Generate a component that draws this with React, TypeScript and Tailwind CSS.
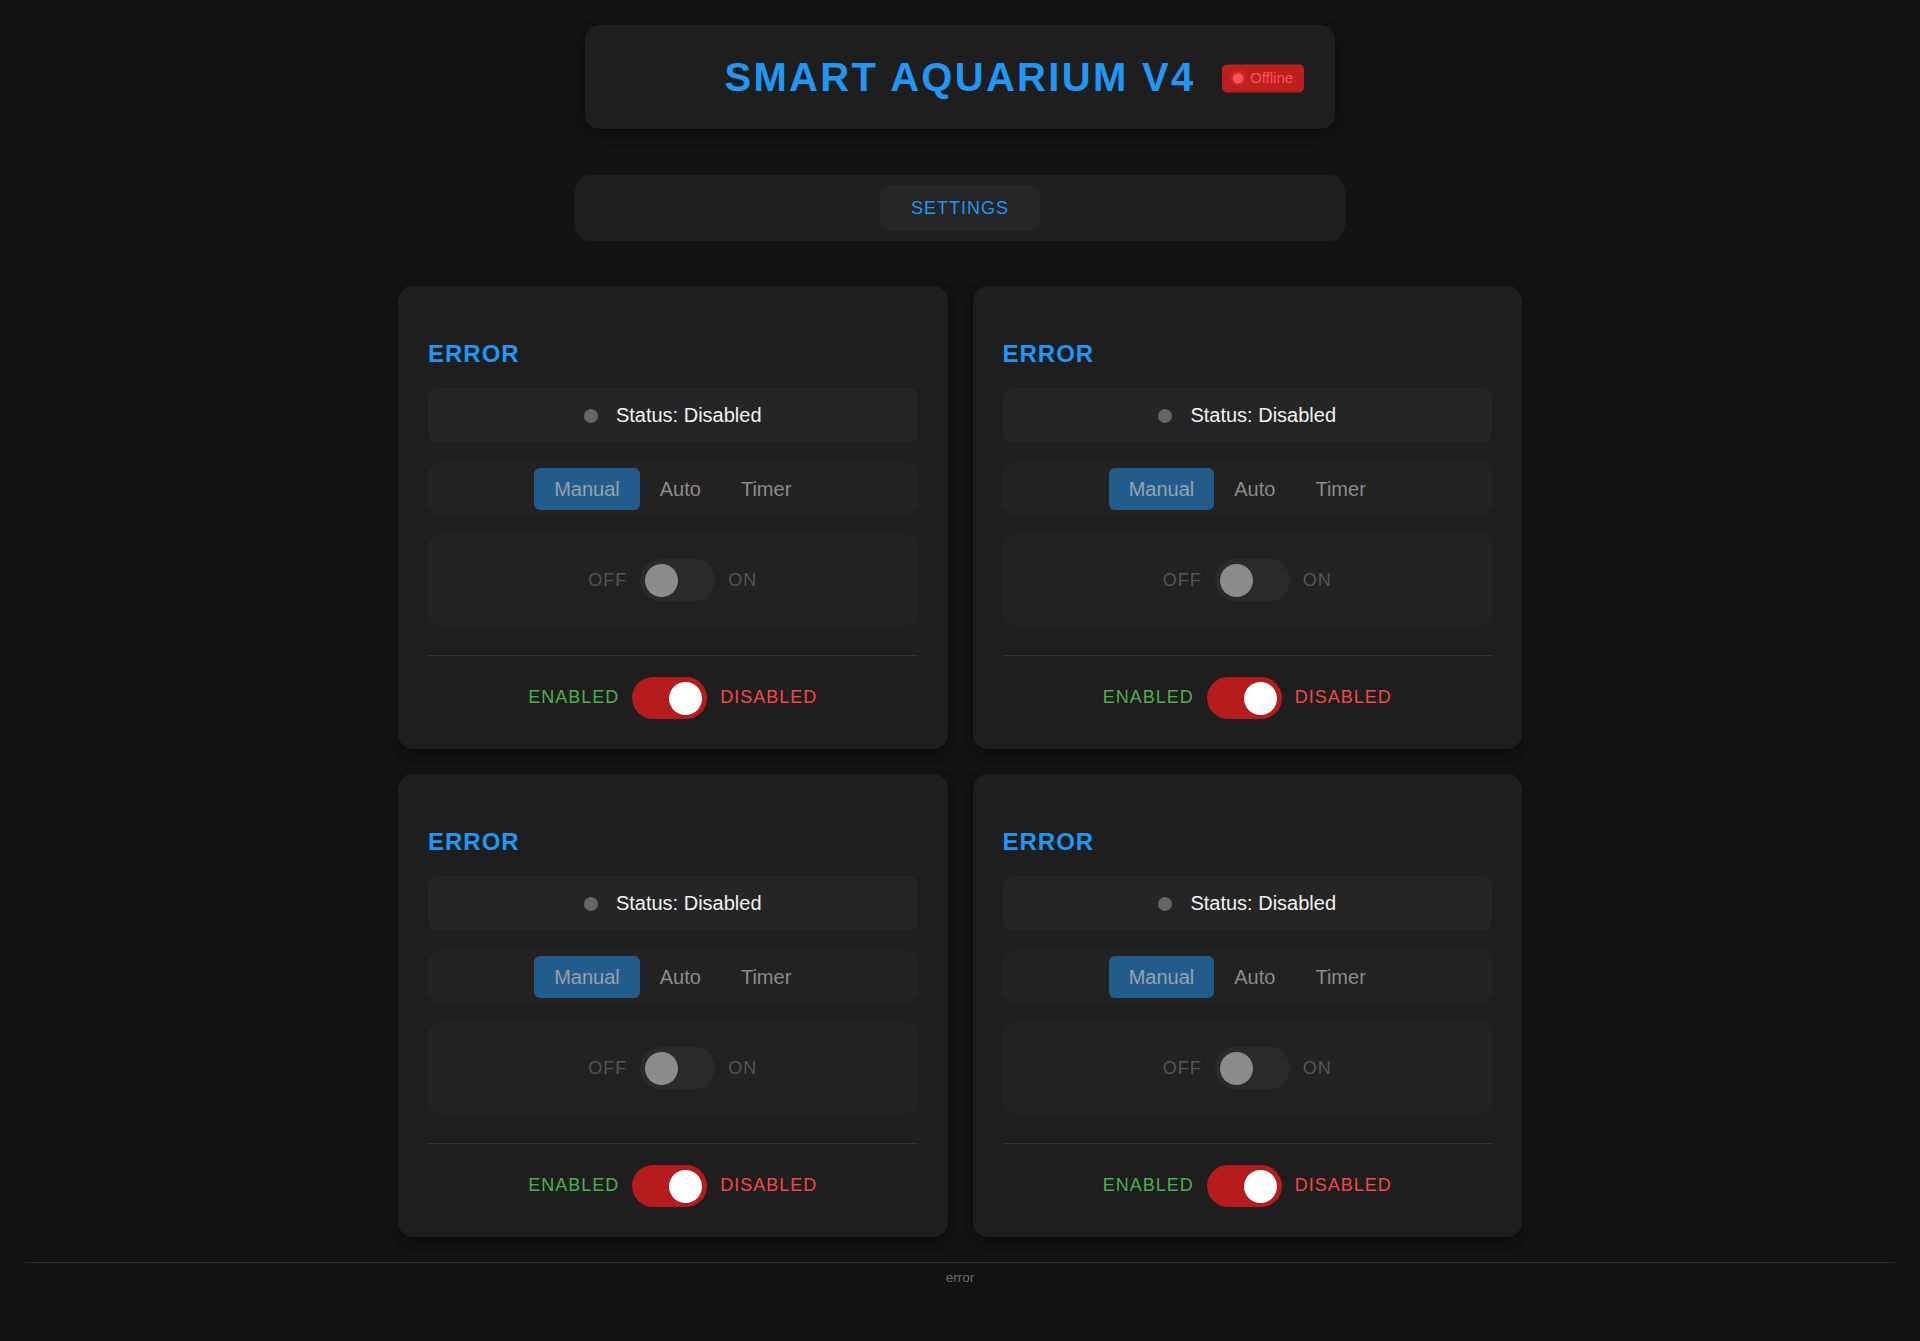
const font = { fontFamily: '"Liberation Sans", Arial, sans-serif' };

function Switch({ on, track, knob }: { on: boolean; track: string; knob: string }) {
  return (
    <div className={`relative w-[75px] h-[42px] rounded-full ${track}`}>
      <span
        className={`absolute top-[4.5px] w-[33px] h-[33px] rounded-full ${knob} ${on ? "right-[5px]" : "left-[5px]"}`}
      />
    </div>
  );
}

function DeviceCard() {
  return (
    <div className="bg-[#1e1e1e] rounded-[15px] pt-[54px] px-[30px] pb-[30px] shadow-[0_4px_10px_rgba(0,0,0,0.35)]">
      <h2 className="text-[24px] leading-[28px] font-bold tracking-[1px] text-[#2196f3] mb-5">ERROR</h2>

      <div className="h-[55px] bg-[#252525] rounded-[10px] flex items-center justify-center">
        <span className="w-[14px] h-[14px] rounded-full bg-[#666] mr-[18px]" />
        <span className="text-[20px] text-[#f2f2f2] -translate-y-px">Status: Disabled</span>
      </div>

      <div className="mt-5 h-[52px] bg-[#222222] rounded-[10px] flex items-center justify-center">
        <button className="h-[42px] px-5 rounded-[6px] bg-[#225c8b] text-[20px] text-[#97a2ac]">Manual</button>
        <button className="h-[42px] px-5 text-[20px] text-[#8c8c8c]">Auto</button>
        <button className="h-[42px] px-5 text-[20px] text-[#8c8c8c]">Timer</button>
      </div>

      <div className="mt-5 h-[90px] bg-[#222222] rounded-[10px] flex items-center justify-center gap-[13px]">
        <span className="text-[18px] tracking-[1px] text-[#555]">OFF</span>
        <Switch on={false} track="bg-[#2a2a2a]" knob="bg-[#8c8c8c]" />
        <span className="text-[18px] tracking-[1px] text-[#555]">ON</span>
      </div>

      <div className="mt-[30px] border-t border-[#333] pt-[21px] flex items-center justify-center gap-[13px]">
        <span className="text-[18px] tracking-[1px] text-[#4caf50] -translate-y-px">ENABLED</span>
        <Switch on={true} track="bg-[#b71c1c]" knob="bg-white" />
        <span className="text-[18px] tracking-[1px] text-[#f44848] -translate-y-px">DISABLED</span>
      </div>
    </div>
  );
}

export default function App() {
  return (
    <div className="min-h-screen bg-[#121212] px-[25px] pt-[25px] pb-[40px]" style={font}>
      <header className="w-[750px] mx-auto h-[104px] bg-[#1e1e1e] rounded-[15px] flex items-center justify-center shadow-[0_4px_12px_rgba(0,0,0,0.35)]">
        <div className="relative">
          <h1 className="text-[40px] font-bold tracking-[2.3px] text-[#2196f3]">SMART AQUARIUM V4</h1>
          <span className="absolute left-full top-1/2 -translate-y-[45%] ml-[27px] h-[28px] px-[10.5px] rounded-[5px] bg-[#bd1f1f] flex items-center gap-[7px] whitespace-nowrap">
            <span className="w-[10px] h-[10px] rounded-full bg-[#ff5252] shadow-[0_0_4px_#ff5252]" />
            <span className="text-[15px] text-[#ff5252]">Offline</span>
          </span>
        </div>
      </header>

      <nav className="w-[770px] mx-auto mt-[46px] h-[66px] bg-[#1e1e1e] rounded-[15px] flex items-center justify-center">
        <button className="w-[160px] h-[46px] bg-[#262626] rounded-[8px] text-[18px] tracking-[1px] text-[#2196f3]">SETTINGS</button>
      </nav>

      <main className="w-[1124px] mx-auto mt-[45px] grid grid-cols-2 gap-[25px]">
        <DeviceCard />
        <DeviceCard />
        <DeviceCard />
        <DeviceCard />
      </main>

      <footer className="mt-[25px] border-t border-[#2a2a2a] pt-[5px] text-center text-[13.6px] text-[#6b6b6b]">
        error
      </footer>
    </div>
  );
}
